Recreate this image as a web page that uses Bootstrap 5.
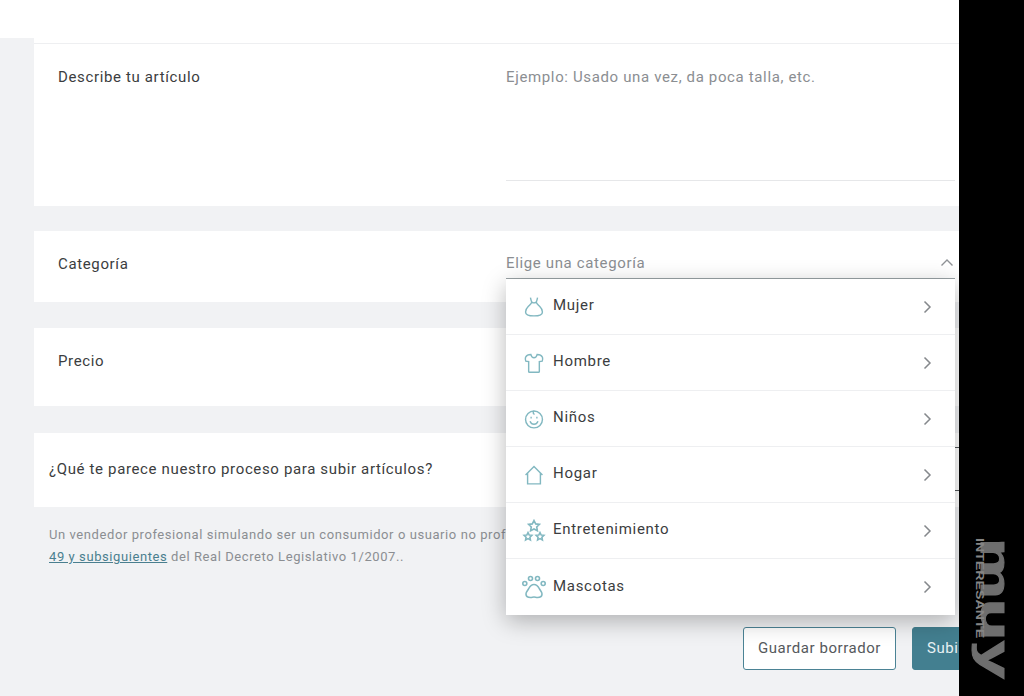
<!DOCTYPE html>
<html lang="es">
<head>
<meta charset="utf-8">
<title>Subir artículo</title>
<link href="https://cdn.jsdelivr.net/npm/bootstrap@5.3.0/dist/css/bootstrap.min.css" rel="stylesheet">
<style>
html,body{height:696px;overflow:hidden}
body{font-family:Roboto,"Liberation Sans",sans-serif;font-size:15px;letter-spacing:.64px;color:#3b3d40;background:#000}
.shell{width:1024px;height:696px}
.page-main{width:959px;height:696px;overflow:hidden;background:#f1f2f4;flex:none}
.top-bar{height:38px;background:#fff}
.aside-black{width:65px;height:696px;background:#000;position:relative;flex:none}
.content-wrap{padding-left:34px}
.panel{background:#fff;display:flex;padding-left:24px}
.panel-desc{height:168px;flex-direction:column;padding:0}
.desc-rule{height:6px;border-bottom:1px solid #eeeff1;flex:none}
.desc-body{display:flex;padding:22px 0 0 24px}
.label-col{width:448px;flex:none}
.field-col{width:449px;flex:none}
.desc-field{height:115px;border-bottom:1px solid #e6e7e9;color:#8b8e92}
.panel-cat{height:71px;margin-top:25px;padding-top:22px}
.cat-field{position:relative;height:48px;margin-top:-1px}
.cat-head{height:27px;border-bottom:1px solid #9aa3a6;color:#8b8e92;display:flex;justify-content:space-between}
.cat-head svg{margin-top:6px;margin-right:1px}
.cat-menu{position:absolute;left:0;top:27px;width:449px;background:#fff;box-shadow:0 6px 22px rgba(0,0,0,.28);z-index:5;border-radius:0}
.cat-item{height:56px;display:flex;align-items:center;padding:0 23px 0 16px;background:#fff;border:0;border-bottom:1px solid #eeeff1;color:#3b3d40}
.cat-item:last-child{border-bottom:0}
.cat-icon{width:24px;height:24px;margin-right:7px;flex:none;fill:none;stroke:#82b8c1;stroke-width:1.6}
.cat-text{position:relative;top:-1px;letter-spacing:.7px}
.chev{margin-left:auto}
.panel-price{height:78px;margin-top:26px;padding-top:22px}
.panel-survey{height:74px;margin-top:27px;padding:0 0 2px 15px;align-items:center;justify-content:space-between}
.survey-box{width:400px;height:44px;border:1px solid #55595c;border-right:0}
.legal{font-size:13px;line-height:22px;color:#8b8e92;padding:17px 0 0 15px;margin:0;letter-spacing:.58px;white-space:nowrap}
.legal a{color:#4a7f8f}
.actions{display:flex;gap:16px;margin-top:59px;padding-left:709px;width:max-content}
.btn-draft,.btn-send{height:43px;padding:0 14px;font-size:15px;letter-spacing:.55px;border-radius:3px;display:flex;align-items:center;flex:none}
.btn-draft{width:153px;justify-content:center;background:#fff;border:1px solid #4b8395;color:#55595c}
.btn-send{background:#437f90;border:1px solid #437f90;color:#e8f1f3;width:140px}
.wm-text{position:absolute;writing-mode:vertical-rl;line-height:1;white-space:nowrap;transform-origin:top left;letter-spacing:0}
.wm-big{left:15px;top:538px;color:#6e6e6e;font:700 42px/42px "Liberation Sans",sans-serif;transform:scaleY(1.63);-webkit-text-stroke:1px #6e6e6e}
.wm-small{left:15px;top:538px;color:#858585;font:700 10px/10px "Liberation Sans",sans-serif;transform:scaleY(1.42)}
</style>
</head>
<body>
<div class="shell d-flex">
  <main class="page-main">
    <div class="top-bar"></div>
    <div class="content-wrap">
      <section class="panel panel-desc">
        <div class="desc-rule"></div>
        <div class="desc-body">
          <div class="label-col">Describe tu artículo</div>
          <div class="field-col desc-field">Ejemplo: Usado una vez, da poca talla, etc.</div>
        </div>
      </section>
      <section class="panel panel-cat">
        <div class="label-col">Categoría</div>
        <div class="field-col cat-field">
          <div class="cat-head">
            <span>Elige una categoría</span>
            <svg width="14" height="9" viewBox="0 0 14 9" fill="none" stroke="#8f9296" stroke-width="1.4"><path d="M1.5 7.500 7 2l5.500 5.500"/></svg>
          </div>
          <div class="cat-menu list-group list-group-flush">
            <div class="cat-item">
              <svg class="cat-icon" viewBox="-1.500 -1.500 27 27"><path d="M8 1.500c.5 2 .5 3 1.500 5-.5 2-2 3-4 5-2 2-3 4-3 6 0 3 3 4.500 9.500 4.500s9.500-1.500 9.500-4.500c0-2-1-4-3-6-2-2-3.500-3-4-5 1-2 1-3 1.500-5M9.500 6.500c1.500 1 3.500 1 5 0"/></svg>
              <span class="cat-text">Mujer</span>
              <svg class="chev" width="9" height="14" viewBox="0 0 9 14" fill="none" stroke="#85888c" stroke-width="1.5"><path d="M1.500 1.500 7 7l-5.500 5.500"/></svg>
            </div>
            <div class="cat-item">
              <svg class="cat-icon" viewBox="-1.500 -1.500 27 27"><path d="M8.500 2.500C6 2.500 3.500 3.500 2.500 5.500c-.5 1.500-.3 3 .3 4.500l3.200.5v11c0 .5.5 1 1 1h10c.5 0 1-.5 1-1v-11l3.200-.5c.6-1.500.8-3 .3-4.500-1-2-3.500-3-6-3-.5 2-2 3.500-3.500 3.500s-3-1.500-3.500-3.500z"/></svg>
              <span class="cat-text">Hombre</span>
              <svg class="chev" width="9" height="14" viewBox="0 0 9 14" fill="none" stroke="#85888c" stroke-width="1.5"><path d="M1.500 1.500 7 7l-5.500 5.500"/></svg>
            </div>
            <div class="cat-item">
              <svg class="cat-icon" viewBox="-1.500 -1.500 27 27"><circle cx="12" cy="12.500" r="9.500"/><path d="M7.500 14.500c1 2.500 2.700 3.500 4.500 3.500s3.500-1 4.500-3.500M12 3c-1.500 1.500-1 3.500.8 3.500"/><path d="M8 10.500h1.500M14.500 10.500h1.500" stroke-width="1.800"/></svg>
              <span class="cat-text">Niños</span>
              <svg class="chev" width="9" height="14" viewBox="0 0 9 14" fill="none" stroke="#85888c" stroke-width="1.5"><path d="M1.500 1.500 7 7l-5.500 5.500"/></svg>
            </div>
            <div class="cat-item">
              <svg class="cat-icon" viewBox="-1.500 -1.500 27 27"><path d="M2.500 12 12 2.500l9.500 9.500M4.800 10v12h14.400V10"/></svg>
              <span class="cat-text">Hogar</span>
              <svg class="chev" width="9" height="14" viewBox="0 0 9 14" fill="none" stroke="#85888c" stroke-width="1.5"><path d="M1.500 1.500 7 7l-5.500 5.500"/></svg>
            </div>
            <div class="cat-item">
              <svg class="cat-icon" viewBox="0 0 24 24"><path d="M12 1.500l1.700 3.400 3.700.5-2.700 2.600.7 3.700L12 10l-3.400 1.700.7-3.700-2.700-2.600 3.700-.5zM6 13.500l1.200 2.500 2.700.3-2 1.900.5 2.700L6 19.600l-2.400 1.300.5-2.700-2-1.900 2.700-.3zM18 13.500l1.200 2.500 2.700.3-2 1.900.5 2.700-2.400-1.300-2.400 1.300.5-2.700-2-1.900 2.700-.3z"/></svg>
              <span class="cat-text">Entretenimiento</span>
              <svg class="chev" width="9" height="14" viewBox="0 0 9 14" fill="none" stroke="#85888c" stroke-width="1.5"><path d="M1.500 1.500 7 7l-5.500 5.500"/></svg>
            </div>
            <div class="cat-item">
              <svg class="cat-icon" viewBox="0 0 24 24"><circle cx="2.800" cy="8.500" r="2"/><circle cx="8.500" cy="3.500" r="2"/><circle cx="15.500" cy="3.500" r="2"/><circle cx="21.200" cy="8.500" r="2"/><path d="M12 9.500c-3 0-4.500 2.500-5.500 4.500C5.500 15.500 4 17 4 19c0 2.500 2.500 3.500 4.500 3.500 1.500 0 2.300-.5 3.500-.5s2 .5 3.500.5c2 0 4.500-1 4.500-3.500 0-2-1.500-3.500-2.500-5-1-2-2.500-4.500-5.500-4.500z"/></svg>
              <span class="cat-text">Mascotas</span>
              <svg class="chev" width="9" height="14" viewBox="0 0 9 14" fill="none" stroke="#85888c" stroke-width="1.5"><path d="M1.500 1.500 7 7l-5.500 5.500"/></svg>
            </div>
          </div>
        </div>
      </section>
      <section class="panel panel-price">
        <div class="label-col">Precio</div>
      </section>
      <section class="panel panel-survey">
        <div>¿Qué te parece nuestro proceso para subir artículos?</div>
        <div class="survey-box"></div>
      </section>
      <p class="legal">Un vendedor profesional simulando ser un consumidor o usuario no profesional incurre en una infracción según los artículos<br><a href="#">49 y subsiguientes</a> del Real Decreto Legislativo 1/2007..</p>
      <div class="actions">
        <button type="button" class="btn btn-draft">Guardar borrador</button>
        <button type="button" class="btn btn-send">Subir artículo</button>
      </div>
    </div>
  </main>
  <aside class="aside-black">
    <div class="wm-text wm-big">muy</div>
    <div class="wm-text wm-small">INTERESANTE</div>
  </aside>
</div>
<script src="https://cdn.jsdelivr.net/npm/bootstrap@5.3.0/dist/js/bootstrap.bundle.min.js"></script>
</body>
</html>
